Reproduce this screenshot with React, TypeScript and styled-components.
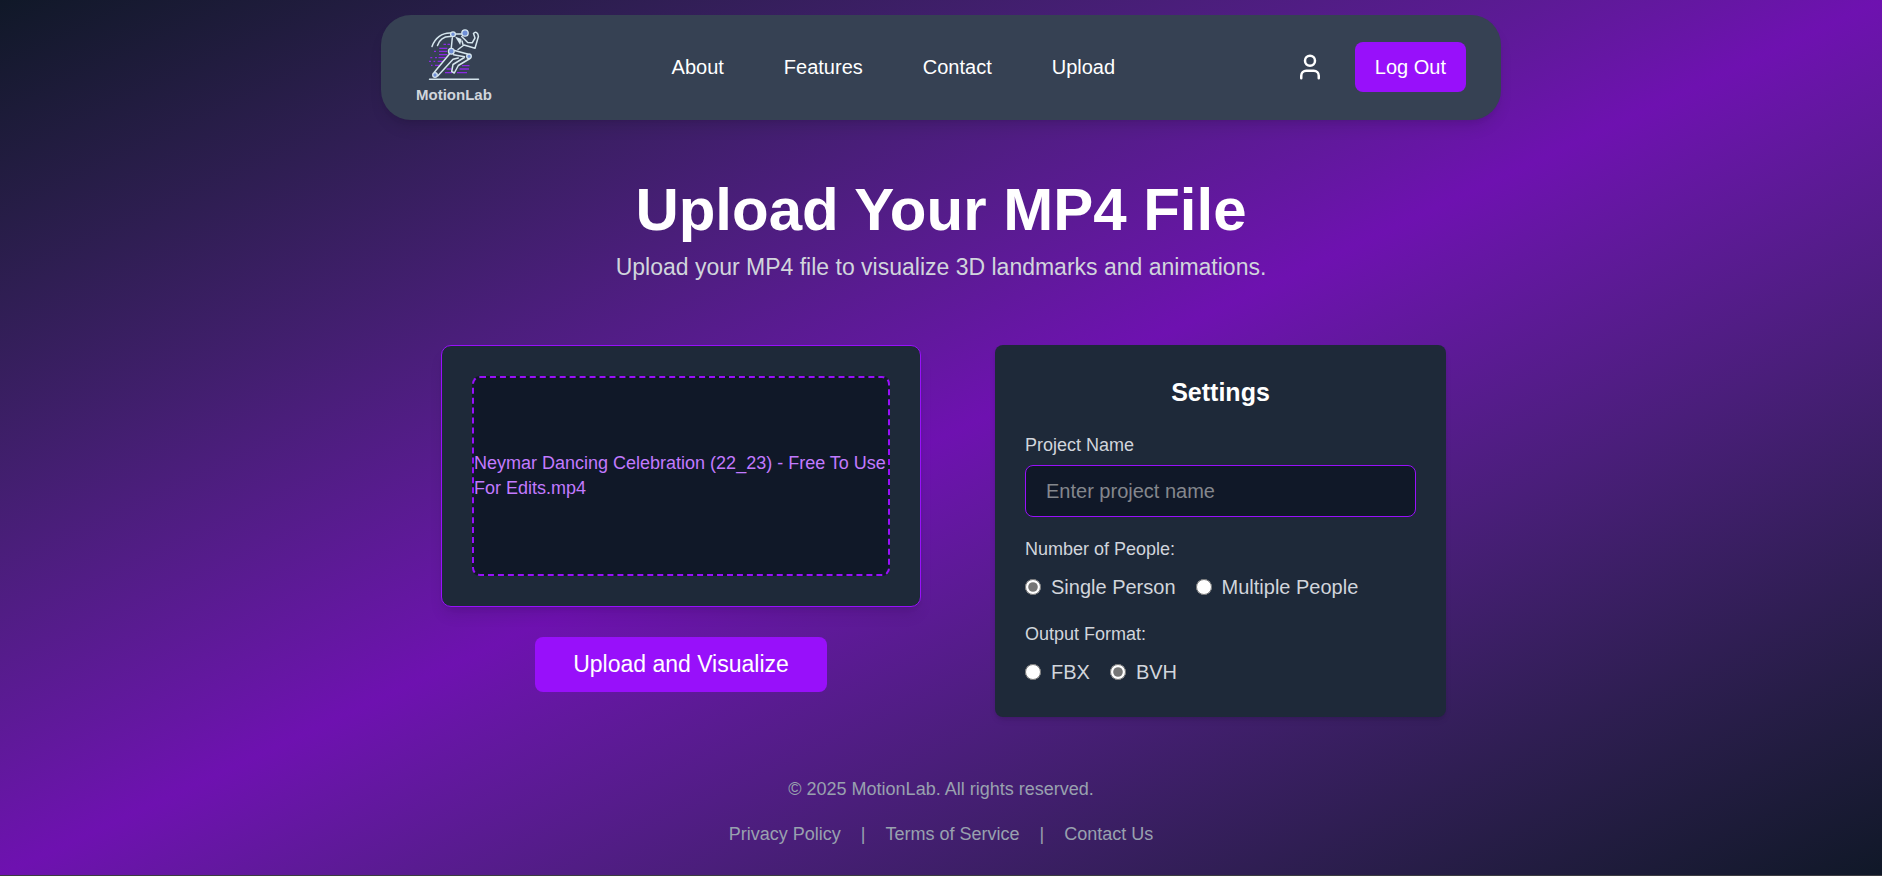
import React, { useState } from "react";
import styled, { createGlobalStyle } from "styled-components";
import { User } from "lucide-react";

const GlobalStyle = createGlobalStyle`
  *, *::before, *::after { box-sizing: border-box; margin: 0; padding: 0; }
  html { background: #101828; }
  body {
    font-family: "Liberation Sans", Arial, Helvetica, sans-serif;
    font-size: 20px;
    line-height: 30px;
    color: #ffffff;
  }
  button, input { font: inherit; color: inherit; }
  a { color: inherit; text-decoration: none; }
`;

const Page = styled.div`
  min-height: 100vh;
  padding: 15px 20px 0;
  display: flex;
  flex-direction: column;
  align-items: center;
  border-bottom: 1px solid #3c3c41;
  background: linear-gradient(to bottom right in oklab, #101828 0%, #6e11b0 50%, #101828 100%);
`;

const Header = styled.header`
  width: 100%;
  max-width: 1120px;
  padding: 10px 35px 15px;
  display: flex;
  justify-content: space-between;
  align-items: center;
  border-radius: 30px;
  background: #364153;
  box-shadow: 0 10px 15px -3px rgba(0, 0, 0, 0.1), 0 4px 6px -4px rgba(0, 0, 0, 0.1);
`;

const Brand = styled.a`
  display: flex;
  flex-direction: column;
  align-items: center;
  font-size: 15px;
  line-height: 20px;
  font-weight: 700;
  color: #d1d5dc;
`;

const Nav = styled.nav`
  display: flex;
  gap: 60px;
  padding-top: 4px;
`;

const Account = styled.div`
  display: flex;
  align-items: center;
  gap: 30px;
  padding-top: 4px;
`;

const ProfileLink = styled.a`
  display: flex;
`;

const Button = styled.button<{ $large?: boolean }>`
  padding: ${(p) => (p.$large ? "10px 38px" : "10px 20px")};
  font-size: ${(p) => (p.$large ? 23 : 20)}px;
  line-height: ${(p) => (p.$large ? 35 : 30)}px;
  border: 0;
  border-radius: 8px;
  background: #9810fa;
  cursor: pointer;
`;

const Intro = styled.section`
  margin-top: 60px;
  text-align: center;
`;

const Title = styled.h1`
  font-size: 60px;
  line-height: 60px;
  font-weight: 700;
`;

const Subtitle = styled.p`
  margin-top: 10px;
  font-size: 23px;
  line-height: 35px;
  color: #d1d5dc;
`;

const Workspace = styled.main`
  width: 100%;
  max-width: 1120px;
  margin-top: 60px;
  padding: 0 55px 0 60px;
  display: flex;
  justify-content: space-between;
  align-items: flex-start;
  gap: 40px;
`;

const UploadColumn = styled.div`
  flex: 0 1 480px;
  display: flex;
  flex-direction: column;
  align-items: center;
  gap: 30px;
`;

const UploadCard = styled.div`
  width: 100%;
  padding: 30px;
  border: 1px solid #9810fa;
  border-radius: 10px;
  background: #1e2939;
  box-shadow: 0 10px 15px -3px rgba(0, 0, 0, 0.1), 0 4px 6px -4px rgba(0, 0, 0, 0.1);
`;

const DropZone = styled.label`
  height: 200px;
  display: flex;
  align-items: center;
  border: 2px dashed #9810fa;
  border-radius: 8px;
  background: #101828;
  font-size: 18px;
  line-height: 25px;
  color: #c27aff;
  cursor: pointer;
`;

const Settings = styled.form`
  flex: 0 1 451px;
  padding: 30px;
  display: flex;
  flex-direction: column;
  gap: 20px;
  border-radius: 8px;
  background: #1e2939;
  color: #d1d5dc;
  box-shadow: 0 4px 6px -1px rgba(0, 0, 0, 0.1), 0 2px 4px -2px rgba(0, 0, 0, 0.1);
`;

const SettingsTitle = styled.h2`
  font-size: 25px;
  line-height: 35px;
  font-weight: 700;
  text-align: center;
  color: #ffffff;
`;

const Field = styled.div`
  display: flex;
  flex-direction: column;
  gap: 5px;
`;

const FieldLabel = styled.label`
  font-size: 18px;
  line-height: 30px;
`;

const TextInput = styled.input`
  width: 100%;
  height: 52px;
  padding: 10px 20px;
  border: 1px solid #9810fa;
  border-radius: 8px;
  background: #101828;
  outline: none;
  &::placeholder { color: #84878d; opacity: 1; }
`;

const Choices = styled.fieldset`
  border: 0;
  min-width: 0;
`;

const Legend = styled.legend`
  font-size: 18px;
  line-height: 25px;
`;

const Options = styled.div`
  margin-top: 10px;
  display: flex;
  gap: 20px;
`;

const Option = styled.label`
  display: flex;
  align-items: center;
  gap: 10px;
`;

const Radio = styled.input`
  width: 16px;
  height: 16px;
  accent-color: #767676;
`;

const HiddenFile = styled.input`
  display: none;
`;

const Footer = styled.footer`
  margin-top: 60px;
  padding-bottom: 28px;
  display: flex;
  flex-direction: column;
  align-items: center;
  gap: 20px;
  font-size: 18px;
  line-height: 25px;
  color: #99a1af;
`;

const FooterLinks = styled.div`
  display: flex;
  gap: 20px;
`;

const joint = { fill: "#6f8fd6", stroke: "#d6e6ee", strokeWidth: 1.3 };

function RunnerLogo() {
  return (
    <svg width="60" height="60" viewBox="0 0 60 60" fill="none" aria-hidden="true">
      <path
        stroke="#8a2be2"
        strokeWidth="1.3"
        d="M19.500 19.300h2.500M23.500 19.300h2.500M15.300 23.300h8M10 26.300h2M15 26.300h8M15 29.700h8.500M6.300 32.700h2M11 32.700h2M14.500 32.700h7M5 36.300h2M9.500 36.300h1.700M13.700 36.300h6M7 40.300h1.500M11 40.300h5M38 40.700h7.500M22.500 44h5M35.500 44h9.500M21 47.700h7M33 47.700h10"
      />
      <g stroke="#d6e6ee" strokeWidth="1.5" strokeLinecap="round" strokeLinejoin="round">
        <path d="M27 8C18 7.500 11 13 8 21.500M27 11.500C20 11 15.500 14.500 13.500 20.500" />
        <path d="M32 9h5.500M28.300 12.700l-1 10" />
        <path d="M37.700 11.500l6 6 4.500.3L51 13l-1.500-4.500c2-2.500 4.700-1 4.900 3L51 23.300 40 20l-6 4.500" />
        <path d="M38 16l1 3.500M30.500 25.500L43.500 29M29.500 29.700l11 2M46 33.500L34.300 40.500l-4 7.500-2.600-1.500 1.300-7L40.300 32.500" />
        <path d="M25.300 29.300L10.300 47.300M34.300 33L29 34.300 13.700 51" />
        <path d="M5.500 54.300h49" />
      </g>
      <path d="M31 11.500l6.500 2.500-1.300 6z" fill="#d6e6ee" />
      <g {...joint}>
        <circle cx="41" cy="8" r="3.200" />
        <circle cx="29" cy="9.300" r="2.400" />
        <circle cx="27.300" cy="26.300" r="2.900" />
        <circle cx="45" cy="31.300" r="2.300" />
        <circle cx="11" cy="50" r="2.300" />
      </g>
    </svg>
  );
}

export default function App() {
  const [people, setPeople] = useState("single");
  const [format, setFormat] = useState("bvh");

  return (
    <>
      <GlobalStyle />
      <Page>
        <Header>
          <Brand href="#">
            <RunnerLogo />
            MotionLab
          </Brand>
          <Nav>
            <a href="#about">About</a>
            <a href="#features">Features</a>
            <a href="#contact">Contact</a>
            <a href="#upload">Upload</a>
          </Nav>
          <Account>
            <ProfileLink href="#profile" aria-label="Profile">
              <User size={30} />
            </ProfileLink>
            <Button type="button">Log Out</Button>
          </Account>
        </Header>

        <Intro>
          <Title>Upload Your MP4 File</Title>
          <Subtitle>Upload your MP4 file to visualize 3D landmarks and animations.</Subtitle>
        </Intro>

        <Workspace>
          <UploadColumn>
            <UploadCard>
              <DropZone>
                Neymar Dancing Celebration (22_23) - Free To Use For Edits.mp4
                <HiddenFile type="file" accept="video/mp4" />
              </DropZone>
            </UploadCard>
            <Button type="button" $large>Upload and Visualize</Button>
          </UploadColumn>

          <Settings>
            <SettingsTitle>Settings</SettingsTitle>
            <Field>
              <FieldLabel htmlFor="project-name">Project Name</FieldLabel>
              <TextInput id="project-name" type="text" placeholder="Enter project name" />
            </Field>
            <Choices>
              <Legend>Number of People:</Legend>
              <Options>
                <Option>
                  <Radio type="radio" name="people" checked={people === "single"} onChange={() => setPeople("single")} />
                  Single Person
                </Option>
                <Option>
                  <Radio type="radio" name="people" checked={people === "multiple"} onChange={() => setPeople("multiple")} />
                  Multiple People
                </Option>
              </Options>
            </Choices>
            <Choices>
              <Legend>Output Format:</Legend>
              <Options>
                <Option>
                  <Radio type="radio" name="format" checked={format === "fbx"} onChange={() => setFormat("fbx")} />
                  FBX
                </Option>
                <Option>
                  <Radio type="radio" name="format" checked={format === "bvh"} onChange={() => setFormat("bvh")} />
                  BVH
                </Option>
              </Options>
            </Choices>
          </Settings>
        </Workspace>

        <Footer>
          <p>© 2025 MotionLab. All rights reserved.</p>
          <FooterLinks>
            <a href="#privacy">Privacy Policy</a>
            <span>|</span>
            <a href="#terms">Terms of Service</a>
            <span>|</span>
            <a href="#contact-us">Contact Us</a>
          </FooterLinks>
        </Footer>
      </Page>
    </>
  );
}
